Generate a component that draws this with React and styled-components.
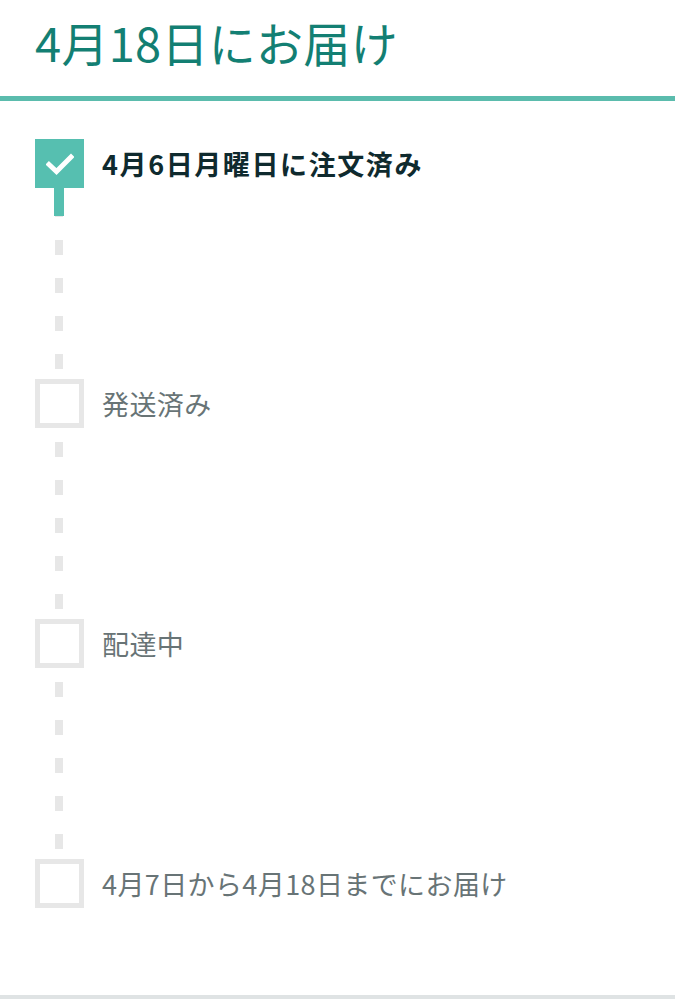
import styled, { createGlobalStyle } from 'styled-components'

const Global = createGlobalStyle`
    html, body {
        margin: 0;
        padding: 0;
        background: #ffffff;
    }
    body {
        font-family: "Noto Sans CJK JP", "Noto Sans", sans-serif;
    }
`
const Page = styled.div`
    width: 675px;
    height: 999px;
    box-sizing: border-box;
    border-bottom: 4px solid #dfe3e4;
    overflow: hidden;
`
const Header = styled.h1`
    margin: 0;
    height: 101px;
    box-sizing: border-box;
    padding: 14px 0 0 35px;
    font-size: 47px;
    line-height: 56px;
    letter-spacing: 0.3px;
    font-weight: 400;
    color: #137f73;
    border-bottom: 5px solid #5bbcad;
`
const Timeline = styled.ol`
    list-style: none;
    margin: 0;
    padding: 38px 0 0 35px;
`
const Step = styled.li`
    display: flex;
    flex-direction: column;
`
const Row = styled.div`
    display: flex;
    align-items: center;
    gap: 18px;
    height: 49px;
`
const Box = styled.div`
    width: 49px;
    height: 49px;
    box-sizing: border-box;
    flex-shrink: 0;
    display: flex;
    align-items: center;
    justify-content: center;
    background: ${({ done }) => (done ? '#56bfb0' : '#ffffff')};
    border: ${({ done }) => (done ? 'none' : '5px solid #e7e7e7')};
`
const Label = styled.span`
    font-size: 27px;
    letter-spacing: ${({ done }) => (done ? '1.6px' : '0.4px')};
    font-weight: ${({ done }) => (done ? 700 : 400)};
    color: ${({ done }) => (done ? '#0f2a2e' : '#687476')};
`
const Connector = styled.div`
    width: 10px;
    height: 191px;
    margin-left: 19px;
    background: repeating-linear-gradient(
            to bottom,
            transparent 0px,
            transparent 14px,
            #e7e7e7 14px,
            #e7e7e7 29px,
            transparent 29px,
            transparent 38px
        )
        center / 8px 100% no-repeat;
`
const Fill = styled.div`
    width: 10px;
    background: #56bfb0;
`

const steps = [
    { label: '4月6日月曜日に注文済み', done: true, progress: 28 },
    { label: '発送済み', done: false, progress: 0 },
    { label: '配達中', done: false, progress: 0 },
    { label: '4月7日から4月18日までにお届け', done: false },
]

function Check() {
    return (
        <svg width="28" height="22" viewBox="0 0 28 22">
            <path d="M3 11.5 L10.5 18.5 L25 4" fill="none" stroke="#ffffff" strokeWidth="5" strokeLinecap="square" />
        </svg>
    )
}

export default function App() {
    return (
        <>
            <Global />
            <Page>
                <Header>4月18日にお届け</Header>
                <Timeline>
                    {steps.map((s, i) => (
                        <Step key={i}>
                            <Row>
                                <Box done={s.done}>{s.done && <Check />}</Box>
                                <Label done={s.done}>{s.label}</Label>
                            </Row>
                            {i < steps.length - 1 && (
                                <Connector>
                                    {s.progress > 0 && <Fill style={{ height: s.progress }} />}
                                </Connector>
                            )}
                        </Step>
                    ))}
                </Timeline>
            </Page>
        </>
    )
}
